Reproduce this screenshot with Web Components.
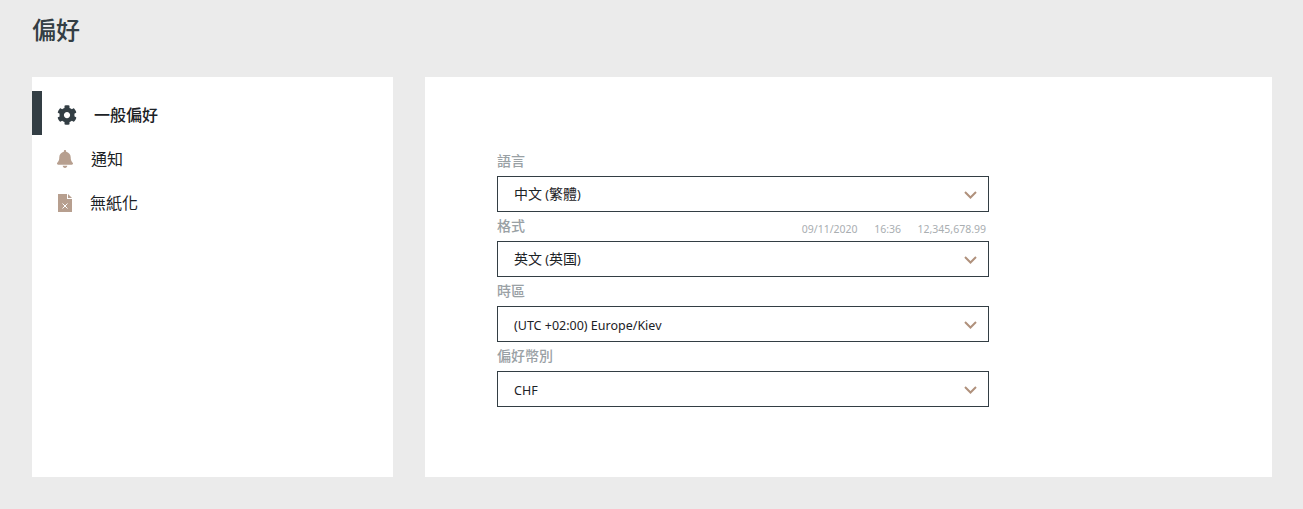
<!DOCTYPE html>
<html lang="zh-Hant">
<head>
<meta charset="utf-8">
<title>偏好</title>
<style>
  html, body { margin: 0; height: 100%; }
  body {
    background: #ebebeb;
    font-family: "Noto Sans", "Noto Sans CJK TC", sans-serif;
    color: #333e44;
  }
</style>
</head>
<body>
<pref-page>
  <span slot="title">偏好</span>
  <pref-nav slot="nav">
    <pref-nav-item active label="一般偏好" icon="gear"></pref-nav-item>
    <pref-nav-item label="通知" icon="bell"></pref-nav-item>
    <pref-nav-item label="無紙化" icon="file"></pref-nav-item>
  </pref-nav>
  <pref-form slot="main">
    <pref-select label="語言" value="中文 (繁體)"></pref-select>
    <pref-select label="格式" value="英文 (英国)">
      <span slot="hint">09/11/2020</span>
      <span slot="hint">16:36</span>
      <span slot="hint">12,345,678.99</span>
    </pref-select>
    <pref-select label="時區" value="(UTC +02:00) Europe/Kiev"></pref-select>
    <pref-select label="偏好幣別" value="CHF"></pref-select>
  </pref-form>
</pref-page>

<script>
const icons = {
  gear: `<svg width="20" height="20" viewBox="0 0 512 512"><path fill="#333e44" d="M487.4 315.7l-42.6-24.6c4.3-23.2 4.3-47 0-70.2l42.6-24.6c4.9-2.8 7.1-8.6 5.5-14-11.1-35.6-30-67.8-54.7-94.6-3.8-4.1-10-5.1-14.8-2.3L380.8 110c-17.9-15.4-38.5-27.3-60.8-35.1V25.8c0-5.6-3.9-10.5-9.4-11.7-36.7-8.2-74.3-7.8-109.2 0-5.5 1.2-9.4 6.1-9.4 11.7V75c-22.2 7.9-42.8 19.8-60.8 35.1L88.7 85.5c-4.9-2.8-11-1.9-14.8 2.3-24.7 26.7-43.6 58.9-54.7 94.6-1.7 5.4.6 11.2 5.5 14L67.3 221c-4.3 23.2-4.3 47 0 70.2l-42.6 24.6c-4.9 2.8-7.1 8.6-5.5 14 11.1 35.6 30 67.8 54.7 94.6 3.8 4.1 10 5.1 14.8 2.3l42.6-24.6c17.9 15.4 38.5 27.3 60.8 35.1v49.2c0 5.6 3.9 10.5 9.4 11.7 36.7 8.2 74.3 7.8 109.2 0 5.5-1.2 9.4-6.1 9.4-11.7v-49.2c22.2-7.9 42.8-19.8 60.8-35.1l42.6 24.6c4.9 2.8 11 1.9 14.8-2.3 24.7-26.7 43.6-58.9 54.7-94.6 1.5-5.5-.7-11.3-5.6-14.1zM256 336c-44.1 0-80-35.9-80-80s35.9-80 80-80 80 35.9 80 80-35.9 80-80 80z"/></svg>`,
  bell: `<svg width="16" height="18" viewBox="0 0 448 512" preserveAspectRatio="none"><path fill="#b79f8f" d="M224 512c35.3 0 64-28.7 64-64H160c0 35.3 28.7 64 64 64zm215.4-149.7c-19.3-20.8-55.5-52-55.5-154.3 0-77.7-54.5-139.9-128-155.2V32c0-17.7-14.3-32-32-32s-32 14.3-32 32v20.8C118.4 68.1 64 130.3 64 208c0 102.3-36.2 133.5-55.5 154.3-6 6.4-8.6 14.1-8.5 21.7.1 16.4 13 32 32.1 32h383.8c19.1 0 32-15.6 32.1-32 .1-7.6-2.5-15.3-8.5-21.7z"/></svg>`,
  file: `<svg width="14" height="18" viewBox="0 0 14 18"><path fill="#b79f8f" d="M0 0h9v5h5v13H0z"/><path fill="#b79f8f" d="M10 0l4 4h-4z"/><path fill="none" stroke="#fff" stroke-width="1" d="M4.5 9.500l5 5m0-5l-5 5"/></svg>`
};

const navItemTemplate = document.createElement("template");
navItemTemplate.innerHTML = `
  <style>
    :host {
      display: flex;
      align-items: center;
      height: 44px;
      font-size: 16px;
      color: #1c2226;
    }
    .bar { width: 10px; align-self: stretch; }
    :host([active]) .bar { background: #333e44; }
    .icon { display: flex; justify-content: center; width: 20px; margin-left: 13px; padding-top: 4px; }
    .label { padding-top: 2px; }
    :host([icon="gear"]) .icon { margin-left: 15px; padding-top: 3px; }
    :host([icon="gear"]) .label { margin-left: 17px; font-weight: 500; }
    :host([icon="bell"]) .label { margin-left: 16px; }
    :host([icon="file"]) .label { margin-left: 15px; }
  </style>
  <div class="bar"></div>
  <div class="icon"></div>
  <div class="label"></div>
`;

class PrefNavItem extends HTMLElement {
  constructor() {
    super();
    this._shadowRoot = this.attachShadow({ mode: "open" });
    this._shadowRoot.appendChild(navItemTemplate.content.cloneNode(true));
  }
  connectedCallback() {
    this._shadowRoot.querySelector(".label").textContent = this.getAttribute("label");
    this._shadowRoot.querySelector(".icon").innerHTML = icons[this.getAttribute("icon")];
  }
}

const navTemplate = document.createElement("template");
navTemplate.innerHTML = `
  <style>
    :host { display: block; padding-top: 14px; }
  </style>
  <slot></slot>
`;

class PrefNav extends HTMLElement {
  constructor() {
    super();
    this.attachShadow({ mode: "open" }).appendChild(navTemplate.content.cloneNode(true));
  }
}

const selectTemplate = document.createElement("template");
selectTemplate.innerHTML = `
  <style>
    :host { display: block; height: 65px; }
    .head {
      display: flex;
      justify-content: space-between;
      align-items: flex-end;
      height: 29px;
      color: #9aa1a5;
    }
    .label { font-size: 14px; font-weight: 500; line-height: 20px; margin-bottom: 5px; }
    .hints {
      display: flex;
      gap: 16.5px;
      font-size: 10.5px;
      line-height: 14px;
      color: #a9aeb1;
      padding-right: 3px;
      margin-bottom: 5px;
    }
    .box {
      box-sizing: border-box;
      display: flex;
      align-items: center;
      justify-content: space-between;
      height: 36px;
      padding: 0 11px 0 16px;
      border: 1px solid #333e44;
      background: #fff;
      font-size: 12.5px;
      color: #1c2226;
    }
    .value { line-height: 20px; }
    .value.latin { padding-top: 4px; }
    .cjk { font-size: 14px; }
    svg { display: block; margin-top: 2px; }
  </style>
  <div class="head">
    <div class="label"></div>
    <div class="hints"><slot name="hint"></slot></div>
  </div>
  <div class="box">
    <span class="value"></span>
    <svg width="13" height="8" viewBox="0 0 13 8"><path fill="none" stroke="#b0917c" stroke-width="2" d="M1 1l5.500 5.500L12 1"/></svg>
  </div>
`;

class PrefSelect extends HTMLElement {
  constructor() {
    super();
    this._shadowRoot = this.attachShadow({ mode: "open" });
    this._shadowRoot.appendChild(selectTemplate.content.cloneNode(true));
  }
  connectedCallback() {
    this._shadowRoot.querySelector(".label").textContent = this.getAttribute("label");
    // the CJK runs sit a size above the latin text in the reference
    const $value = this._shadowRoot.querySelector(".value");
    const runs = this.getAttribute("value").split(/([\u4e00-\u9fff]+)/);
    if (runs.length === 1) $value.classList.add("latin");
    runs.forEach((run, i) => {
      if (i % 2) {
        const $run = document.createElement("span");
        $run.className = "cjk";
        $run.textContent = run;
        $value.appendChild($run);
      } else {
        $value.appendChild(document.createTextNode(run));
      }
    });
  }
}

const formTemplate = document.createElement("template");
formTemplate.innerHTML = `
  <style>
    :host { display: block; width: 492px; padding: 70px 0 0 72px; }
  </style>
  <slot></slot>
`;

class PrefForm extends HTMLElement {
  constructor() {
    super();
    this.attachShadow({ mode: "open" }).appendChild(formTemplate.content.cloneNode(true));
  }
}

const pageTemplate = document.createElement("template");
pageTemplate.innerHTML = `
  <style>
    :host { display: block; padding: 0 31px 0 32px; }
    h1 {
      margin: 0;
      height: 77px;
      padding-top: 13px;
      box-sizing: border-box;
      font-size: 24px;
      line-height: 34px;
      font-weight: 500;
      color: #333e44;
    }
    .cols { display: flex; gap: 32px; height: 400px; }
    .card { background: #fff; }
    .nav { width: 361px; }
    .main { flex: 1; }
  </style>
  <h1><slot name="title"></slot></h1>
  <div class="cols">
    <div class="card nav"><slot name="nav"></slot></div>
    <div class="card main"><slot name="main"></slot></div>
  </div>
`;

class PrefPage extends HTMLElement {
  constructor() {
    super();
    this.attachShadow({ mode: "open" }).appendChild(pageTemplate.content.cloneNode(true));
  }
}

customElements.define("pref-nav-item", PrefNavItem);
customElements.define("pref-nav", PrefNav);
customElements.define("pref-select", PrefSelect);
customElements.define("pref-form", PrefForm);
customElements.define("pref-page", PrefPage);
</script>
</body>
</html>
